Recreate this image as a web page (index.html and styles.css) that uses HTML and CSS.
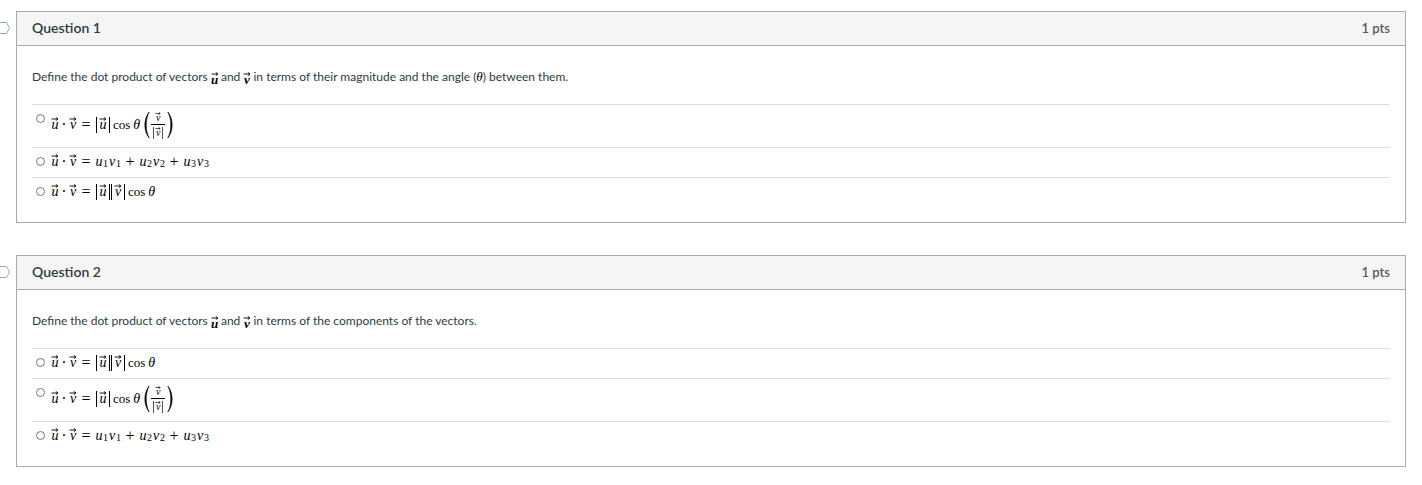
FILE: index.html
```html
<!DOCTYPE html>
<html lang="en">
  <head>
    <meta charset="UTF-8" />
    <meta name="viewport" content="width=device-width, initial-scale=1.0" />
    <title>Quiz</title>
    <link rel="stylesheet" href="styles.css" />
  </head>
  <body>
    <!-- shared shapes -->
    <svg class="defs" aria-hidden="true">
      <symbol id="arrow" viewBox="0 0 8 4">
        <path d="M0.5 2H6.5M4.8 0.4L7 2L4.8 3.6" fill="none" stroke="#000" stroke-width="0.9" />
      </symbol>
      <symbol id="flag" viewBox="0 0 11 12">
        <path d="M-2 0.5H6.5L9.5 6L6.5 11.5H-2" fill="#fff" stroke="#8fabc0" />
      </symbol>
      <symbol id="paren" viewBox="0 0 6 28">
        <path d="M5.2 1C-0.6 8 -0.6 20 5.2 27C1.2 20 1.2 8 5.2 1Z" fill="#000" stroke="#000" stroke-width="0.6" />
      </symbol>
    </svg>

    <form class="quiz">
      <div class="question">
        <button type="button" class="flag" aria-label="Flag question 1"><svg><use href="#flag" /></svg></button>
        <section class="box">
          <header class="box-header">
            <h2>Question 1</h2>
            <span class="points">1 pts</span>
          </header>
          <div class="box-body">
            <p class="prompt">
              Define the dot product of vectors
              <span class="inline-math"><i class="vec">u<svg><use href="#arrow" /></svg></i></span>
              and
              <span class="inline-math"><i class="vec">v<svg><use href="#arrow" /></svg></i></span>
              in terms of their magnitude and the angle (<i class="angle">θ</i>) between them.
            </p>
            <div class="answer tall">
              <input type="radio" name="q1" id="q1a" />
              <label for="q1a" class="math">
                <i class="vec">u<svg><use href="#arrow" /></svg></i>
                <span class="op dot">·</span>
                <i class="vec">v<svg><use href="#arrow" /></svg></i>
                <span class="op">=</span>
                <span class="abs"><i class="vec">u<svg><use href="#arrow" /></svg></i></span>
                <span class="cos">cos</span>
                <i class="theta">θ</i>
                <svg class="paren"><use href="#paren" /></svg>
                <span class="frac">
                  <span class="num"><i class="vec">v<svg><use href="#arrow" /></svg></i></span>
                  <span class="den"><i class="vec">v<svg><use href="#arrow" /></svg></i></span>
                </span>
                <svg class="paren right"><use href="#paren" /></svg>
              </label>
            </div>
            <div class="answer">
              <input type="radio" name="q1" id="q1b" />
              <label for="q1b" class="math">
                <i class="vec">u<svg><use href="#arrow" /></svg></i>
                <span class="op dot">·</span>
                <i class="vec">v<svg><use href="#arrow" /></svg></i>
                <span class="op">=</span>
                <i class="var">u</i><sub>1</sub><i class="var">v</i><sub>1</sub>
                <span class="op">+</span>
                <i class="var">u</i><sub>2</sub><i class="var">v</i><sub>2</sub>
                <span class="op">+</span>
                <i class="var">u</i><sub>3</sub><i class="var">v</i><sub>3</sub>
              </label>
            </div>
            <div class="answer">
              <input type="radio" name="q1" id="q1c" />
              <label for="q1c" class="math">
                <i class="vec">u<svg><use href="#arrow" /></svg></i>
                <span class="op dot">·</span>
                <i class="vec">v<svg><use href="#arrow" /></svg></i>
                <span class="op">=</span>
                <span class="abs"><i class="vec">u<svg><use href="#arrow" /></svg></i></span>
                <span class="abs"><i class="vec">v<svg><use href="#arrow" /></svg></i></span>
                <span class="cos">cos</span>
                <i class="theta">θ</i>
              </label>
            </div>
          </div>
        </section>
      </div>

      <div class="question">
        <button type="button" class="flag" aria-label="Flag question 2"><svg><use href="#flag" /></svg></button>
        <section class="box">
          <header class="box-header">
            <h2>Question 2</h2>
            <span class="points">1 pts</span>
          </header>
          <div class="box-body">
            <p class="prompt">
              Define the dot product of vectors
              <span class="inline-math"><i class="vec">u<svg><use href="#arrow" /></svg></i></span>
              and
              <span class="inline-math"><i class="vec">v<svg><use href="#arrow" /></svg></i></span>
              in terms of the components of the vectors.
            </p>
            <div class="answer">
              <input type="radio" name="q2" id="q2a" />
              <label for="q2a" class="math">
                <i class="vec">u<svg><use href="#arrow" /></svg></i>
                <span class="op dot">·</span>
                <i class="vec">v<svg><use href="#arrow" /></svg></i>
                <span class="op">=</span>
                <span class="abs"><i class="vec">u<svg><use href="#arrow" /></svg></i></span>
                <span class="abs"><i class="vec">v<svg><use href="#arrow" /></svg></i></span>
                <span class="cos">cos</span>
                <i class="theta">θ</i>
              </label>
            </div>
            <div class="answer tall">
              <input type="radio" name="q2" id="q2b" />
              <label for="q2b" class="math">
                <i class="vec">u<svg><use href="#arrow" /></svg></i>
                <span class="op dot">·</span>
                <i class="vec">v<svg><use href="#arrow" /></svg></i>
                <span class="op">=</span>
                <span class="abs"><i class="vec">u<svg><use href="#arrow" /></svg></i></span>
                <span class="cos">cos</span>
                <i class="theta">θ</i>
                <svg class="paren"><use href="#paren" /></svg>
                <span class="frac">
                  <span class="num"><i class="vec">v<svg><use href="#arrow" /></svg></i></span>
                  <span class="den"><i class="vec">v<svg><use href="#arrow" /></svg></i></span>
                </span>
                <svg class="paren right"><use href="#paren" /></svg>
              </label>
            </div>
            <div class="answer">
              <input type="radio" name="q2" id="q2c" />
              <label for="q2c" class="math">
                <i class="vec">u<svg><use href="#arrow" /></svg></i>
                <span class="op dot">·</span>
                <i class="vec">v<svg><use href="#arrow" /></svg></i>
                <span class="op">=</span>
                <i class="var">u</i><sub>1</sub><i class="var">v</i><sub>1</sub>
                <span class="op">+</span>
                <i class="var">u</i><sub>2</sub><i class="var">v</i><sub>2</sub>
                <span class="op">+</span>
                <i class="var">u</i><sub>3</sub><i class="var">v</i><sub>3</sub>
              </label>
            </div>
          </div>
        </section>
      </div>
    </form>
  </body>
</html>
```

FILE: styles.css
```css
* {
  box-sizing: border-box;
}
body {
  margin: 0;
  background: #fff;
  color: #2d3b45;
  font-family: Lato, "Liberation Sans", sans-serif;
  font-size: 12px;
}
.defs {
  display: none;
}
.quiz {
  display: flex;
  flex-direction: column;
  gap: 32px;
  padding: 11px 16px 16px 0;
}
.question {
  display: flex;
  align-items: flex-start;
}
.flag {
  width: 16px;
  padding: 11px 0 0;
  border: none;
  background: none;
  cursor: pointer;
}
.flag svg {
  display: block;
  width: 11px;
  height: 12px;
}
.box {
  flex: 1;
  border: 1px solid #aaa;
}
.box-header {
  display: flex;
  justify-content: space-between;
  align-items: center;
  height: 34px;
  padding: 0 15px 2px;
  background: #f5f5f5;
  border-bottom: 1px solid #aaa;
}
.box-header h2 {
  margin: 0;
  font-size: 14px;
  font-weight: 600;
  line-height: 20px;
}
.points {
  color: #595959;
  font-size: 13px;
  font-weight: 600;
}
.box-body {
  padding: 21px 15px 15px;
}
.prompt {
  margin: 0 0 16px;
  line-height: 20px;
}
.answer {
  display: flex;
  align-items: flex-start;
  height: 30px;
  border-top: 1px solid #ddd;
}
.answer.tall {
  height: 43px;
}
.answer input {
  appearance: none;
  width: 9px;
  height: 9px;
  margin: 9px 6px 0 4px;
  border: 1px solid #767676;
  border-radius: 50%;
  background: #fff;
}
.answer input:checked {
  background: #2d3b45;
}

/* equations */
.math {
  display: flex;
  align-items: center;
  height: 27px;
  color: #000;
  font-family: "Liberation Serif", serif;
  font-size: 14px;
  line-height: 16px;
}
.tall .math {
  height: 40px;
}
.vec {
  position: relative;
  display: inline-block;
  width: 8px;
  text-align: center;
}
.vec svg {
  position: absolute;
  top: 0;
  left: 0;
  width: 8px;
  height: 4px;
}
.op {
  width: 18px;
  font-size: 16px;
  text-align: center;
}
.op.dot {
  width: 10px;
}
.var {
  width: 8px;
  text-align: center;
}
.math sub {
  width: 5px;
  padding-top: 5px;
  font-size: 10px;
  line-height: 12px;
  vertical-align: baseline;
}
.abs {
  display: flex;
  height: 16px;
  margin-left: 1px;
  padding: 0 2px;
  border: solid #000;
  border-width: 0 1px;
}
.cos {
  margin-left: 3px;
  font-size: 13px;
}
.theta {
  margin-left: 3px;
}
.paren {
  width: 6px;
  height: 28px;
  margin-left: 4px;
}
.paren.right {
  margin-left: 2px;
  transform: scaleX(-1);
}
.frac {
  display: flex;
  flex-direction: column;
  align-items: center;
  width: 14px;
  margin-left: 1px;
  font-size: 10px;
  line-height: 12px;
}
.num {
  width: 14px;
  border-bottom: 1px solid #000;
  text-align: center;
}
.den {
  margin-top: 2px;
  padding: 0 1px;
  border: solid #555;
  border-width: 0 1px;
}
.frac .vec {
  width: 6px;
}
.frac .vec svg {
  width: 6px;
  height: 3px;
}
.inline-math {
  display: inline-block;
  color: #000;
  font-family: "Liberation Serif", serif;
  font-size: 13px;
  font-weight: bold;
  line-height: 16px;
  vertical-align: -3px;
}
.inline-math .vec {
  width: 7px;
}
.angle {
  color: #000;
  font-family: "Liberation Serif", serif;
  font-size: 13px;
  line-height: 14px;
}
```
